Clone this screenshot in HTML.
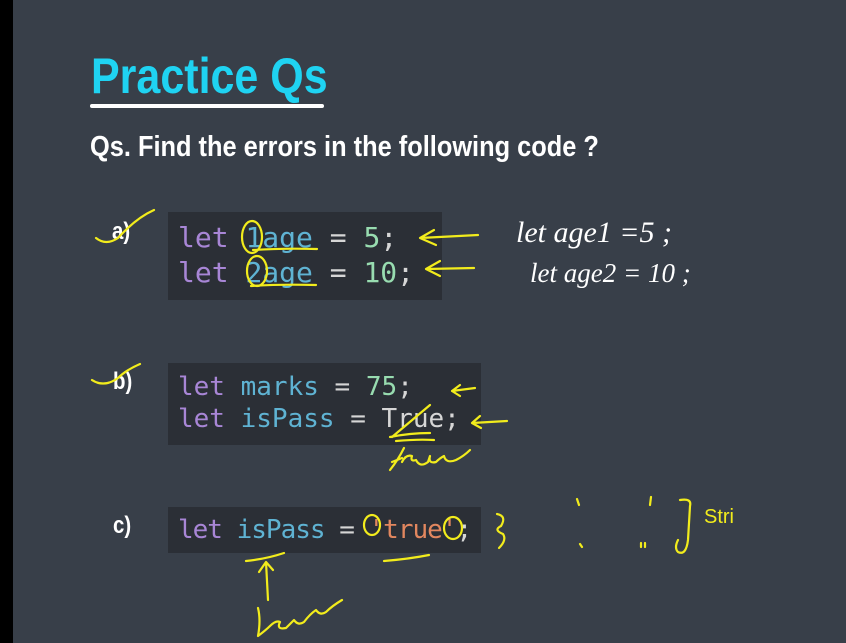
<!DOCTYPE html>
<html><head><meta charset="utf-8"><style>
html,body{margin:0;padding:0}
body{width:846px;height:643px;background:#383f49;position:relative;overflow:hidden;font-family:"Liberation Sans",sans-serif}
.strip{position:absolute;left:0;top:0;width:13px;height:643px;background:#000}
.title{position:absolute;left:91px;top:47px;font-size:50px;font-weight:bold;color:#1fd3f2;transform:scaleX(0.86);transform-origin:left top;white-space:nowrap}
.ul{position:absolute;left:90px;top:104px;width:234px;height:4px;background:#fff;border-radius:2px}
.sub{position:absolute;left:90px;top:131px;font-size:29px;font-weight:bold;color:#fff;transform:scaleX(0.875);transform-origin:left top;white-space:nowrap}
.lab{position:absolute;font-size:24px;font-weight:bold;color:#fff;transform:scaleX(0.85);transform-origin:left top}
.code{position:absolute;background:#2b2f36;font-family:"DejaVu Sans Mono","Liberation Mono",monospace;font-size:26px;color:#d6d6d6;white-space:pre;padding-left:10px;box-sizing:border-box}
.k{color:#a886d6}.v{color:#5fb3d3}.n{color:#98dcb0}.s{color:#e2875f}
</style></head><body>
<div class="strip"></div>
<div class="title">Practice Qs</div>
<div class="ul"></div>
<div class="sub">Qs. Find the errors in the following code ?</div>
<div class="lab" style="left:112px;top:218px">a)</div>
<div class="lab" style="left:113px;top:368px">b)</div>
<div class="lab" style="left:113px;top:512px">c)</div>
<div class="code" style="left:168px;top:212px;width:274px;height:88px;line-height:35px;padding-top:8px;font-size:28px"><span class="k">let</span> <span class="v">1age</span> = <span class="n">5</span>;
<span class="k">let</span> <span class="v">2age</span> = <span class="n">10</span>;</div>
<div class="code" style="left:168px;top:363px;width:313px;height:82px;line-height:32px;padding-top:8px"><span class="k">let</span> <span class="v">marks</span> = <span class="n">75</span>;
<span class="k">let</span> <span class="v">isPass</span> = True;</div>
<div class="code" style="left:168px;top:507px;width:313px;height:46px;line-height:46px;letter-spacing:-1px"><span class="k">let</span> <span class="v">isPass</span> = <span class="s">'true'</span>;</div>
<svg width="846" height="643" style="position:absolute;left:0;top:0" fill="none" stroke="#f2ec1c" stroke-width="2.2" stroke-linecap="round" stroke-linejoin="round">
<path d="M96 238 q10 8 22 0 q18 -20 36 -28"/>
<ellipse cx="252" cy="237" rx="10" ry="16"/>
<ellipse cx="257" cy="271" rx="10" ry="15"/>
<path d="M253 250 q30 -2 64 -1"/><path d="M251 286 q30 -2 65 -1"/>
<path d="M478 235 L420 238 M434 230 L420 238 L436 245"/>
<path d="M474 268 L426 269 M440 261 L426 269 L440 276"/>
<path d="M92 380 q12 8 26 -2 q8 -8 22 -14"/>
<path d="M475 388 L452 391 M460 385 L452 391 L460 396"/>
<path d="M507 421 L472 423 M480 416 L472 423 L481 428"/>
<path d="M392 437 L430 405 M390 437 q20 -4 40 -4 M396 441 q22 -2 38 -1"/>
<path d="M390 470 q8 -10 14 -22 M392 462 l10 -4 M402 462 q4 -8 10 -6 q-2 6 4 4 q4 8 12 2 l2 -6 q-2 8 6 6 q4 -4 8 -6 q2 8 12 4 q8 -4 14 -10"/>
<ellipse cx="372" cy="525" rx="8" ry="10"/><ellipse cx="453" cy="528" rx="9" ry="11"/>
<path d="M246 561 q20 -2 38 -8"/><path d="M384 561 q25 -2 45 -6"/>
<path d="M268 600 L266 562 M259 572 L266 562 L273 570"/>
<path d="M258 608 q3 12 0 28 q8 -6 12 -10 q6 -6 10 -4 q-4 8 6 6 q4 -4 8 -8 q4 6 10 2 q6 -8 12 -12 q4 6 10 2 q6 -6 16 -12"/>
<path d="M497 514 q10 2 4 12 q-8 4 2 8 q4 6 -4 14"/>
<path d="M577 499 l2 6 M580 544 l2 3 M651 497 l-1 8 M641 543 l0 4 M645 543 l0 4 M680 500 q12 -2 10 6 l-2 34 q-2 16 -10 12 q-4 -4 0 -12"/>
</svg>
<svg width="846" height="643" style="position:absolute;left:0;top:0">
<g font-family="Liberation Serif,serif" font-style="italic" fill="#fff">
<text x="516" y="242" font-size="30">let  age1 =5 ;</text>
<text x="530" y="282" font-size="27">let  age2 = 10 ;</text>
</g>
<text x="704" y="523" font-family="Liberation Sans,sans-serif" font-size="20" fill="#f2ec1c">Stri</text>
</svg>
</body></html>
